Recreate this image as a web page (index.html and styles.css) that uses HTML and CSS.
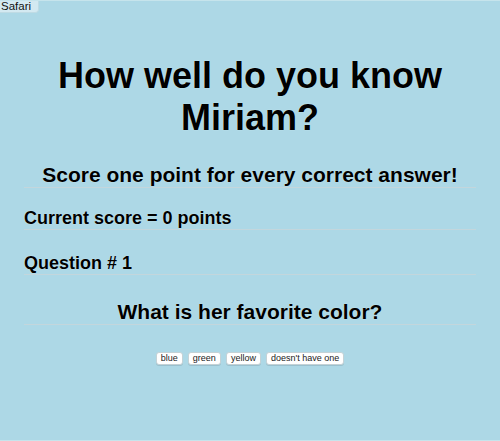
FILE: index.html
```html
<!DOCTYPE html>
<html lang="en">
<head>
<meta charset="utf-8">
<title>How well do you know Miriam?</title>
<link rel="stylesheet" href="styles.css">
</head>
<body>
  <div class="tab">Safari</div>
  <main class="quiz">
    <h1 class="title">How well do you know Miriam?</h1>
    <h2 class="rule">Score one point for every correct answer!</h2>
    <p class="score">Current score = 0 points</p>
    <p class="qnum">Question # 1</p>
    <h2 class="question">What is her favorite color?</h2>
    <div class="answers">
      <button class="answer">blue</button>
      <button class="answer">green</button>
      <button class="answer">yellow</button>
      <button class="answer">doesn't have one</button>
    </div>
  </main>
</body>
</html>
```

FILE: styles.css
```css
html {
  background: #add8e6;
}

body {
  margin: 0;
  box-sizing: border-box;
  height: 100vh;
  border-top: 1px solid #c6e4ec;
  border-bottom: 1px solid #c6e4ec;
  background: #add8e6;
  font-family: "Liberation Sans", Arial, sans-serif;
  color: #000;
  position: relative;
}

.tab {
  position: absolute;
  top: -1px;
  left: 0;
  width: 39px;
  height: 13px;
  box-sizing: border-box;
  padding-left: 1px;
  background: #d3e9f1;
  border-right: 1px solid #bfdbe4;
  border-bottom: 1px solid #bfdbe4;
  border-bottom-right-radius: 4px;
  font-size: 11.5px;
  line-height: 12px;
  color: #111;
}

.quiz {
  margin: 0 24px;
  text-shadow: 0 0 1px rgba(230, 255, 255, 0.95);
}

.title {
  margin: 54px 0 0;
  font-size: 36px;
  line-height: 42px;
  font-weight: bold;
  text-align: center;
}

.rule {
  margin: 24px 0 0;
  font-size: 21px;
  line-height: 24px;
  font-weight: bold;
  text-align: center;
  border-bottom: 1px solid #c3d6dc;
}

.score,
.qnum {
  font-size: 18px;
  line-height: 21px;
  font-weight: bold;
  border-bottom: 1px solid #c3d6dc;
}

.score {
  margin: 20px 0 0;
}

.qnum {
  margin: 23px 0 0;
}

.question {
  margin: 25px 0 0;
  font-size: 21px;
  line-height: 24px;
  font-weight: bold;
  text-align: center;
  border-bottom: 1px solid #c3d6dc;
}

.answers {
  margin-top: 27px;
  display: flex;
  justify-content: center;
  gap: 5px;
}

.answer {
  font-family: "Liberation Sans", Arial, sans-serif;
  font-size: 9px;
  line-height: 11px;
  height: 13px;
  padding: 0 4px;
  margin: 0;
  background: #fff;
  color: #222;
  border: 1px solid #c4d2d6;
  border-radius: 3px;
  box-shadow: 0 1px 0 rgba(120, 150, 160, 0.35);
  text-shadow: none;
}
```
